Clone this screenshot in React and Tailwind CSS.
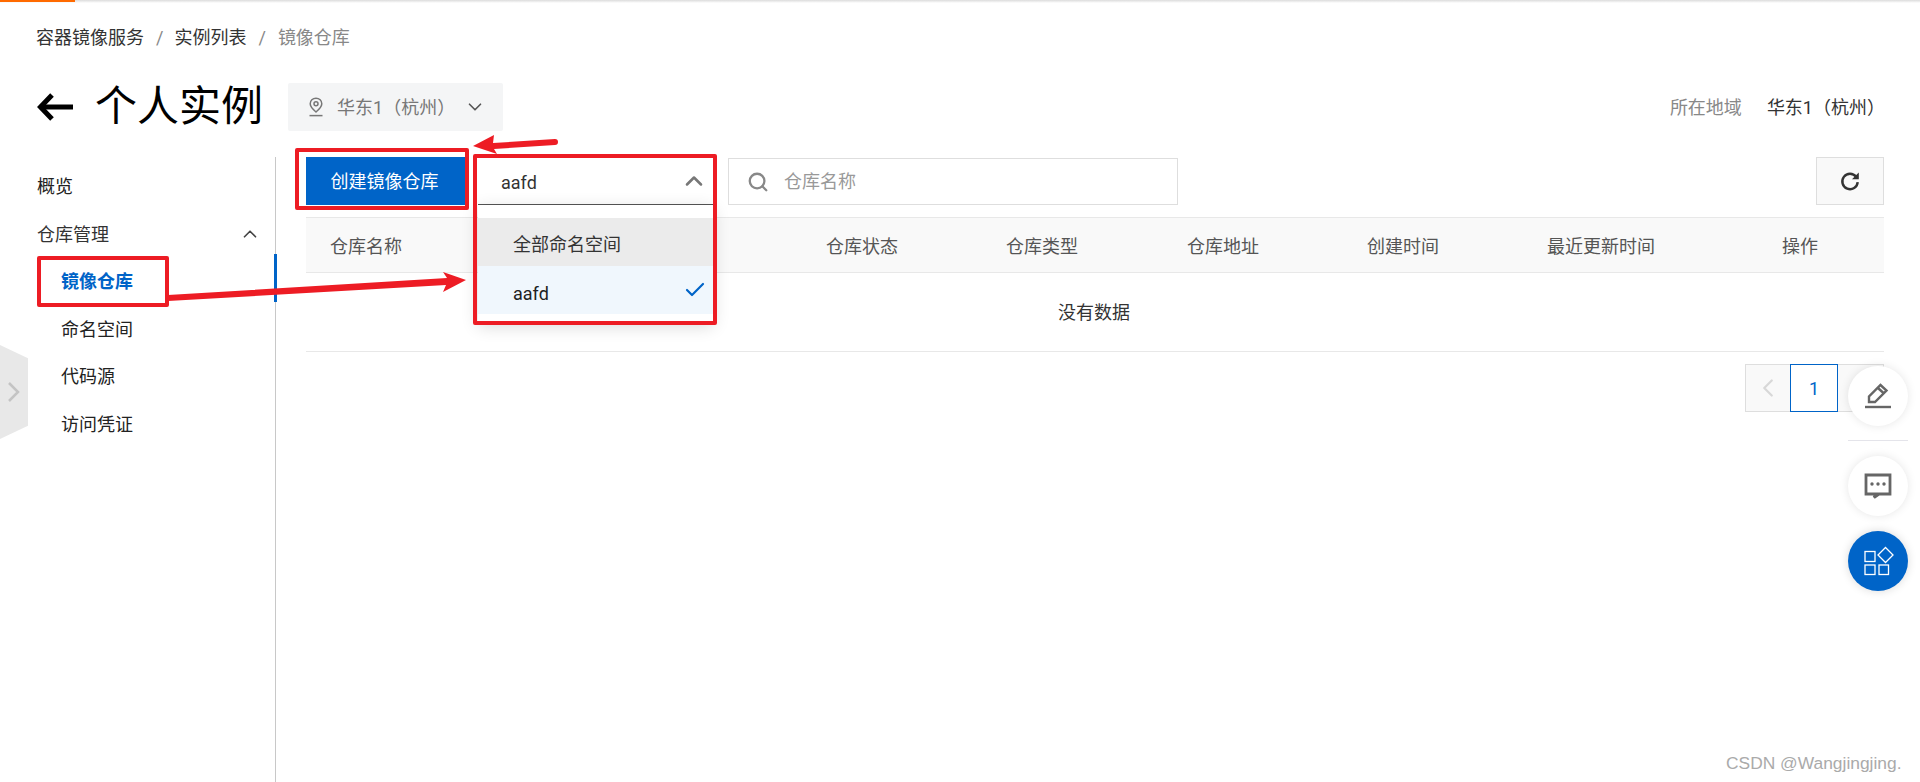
import { ChevronDown, ChevronUp, ChevronLeft, Check, Search } from "lucide-react";

const menu = ["命名空间", "代码源", "访问凭证"];
const columns = ["仓库名称", "仓库状态", "仓库类型", "仓库地址", "创建时间", "最近更新时间", "操作"];

function PinIcon() {
  return (
    <svg width="16" height="20" viewBox="0 0 16 20" fill="none" stroke="#777" strokeWidth="1.5">
      <path d="M8 1.2c-3.3 0-5.8 2.5-5.8 5.6 0 3.2 3.2 6 5.8 8.2 2.600-2.200 5.800-5 5.800-8.200 0-3.100-2.500-5.600-5.800-5.600z" />
      <circle cx="8" cy="6.800" r="2" />
      <path d="M1.500 18.600h13" />
    </svg>
  );
}

function RefreshIcon() {
  return (
    <svg width="22" height="22" viewBox="0 0 20 20" fill="none">
      <path d="M15.600 6.200A7 7 0 1 0 17 11" stroke="#333" strokeWidth="2.200" />
      <path d="M18 2.200v6.200h-6.200z" fill="#333" />
    </svg>
  );
}

function PenIcon() {
  return (
    <svg width="28" height="26" viewBox="0 0 28 26" fill="none" stroke="#666" strokeWidth="2.400">
      <path d="M5 19v-5.500L16.500 2l6 5.500L11 19z" />
      <path d="M14 5l6 5.500" />
      <path d="M1 24h26" />
    </svg>
  );
}

function ChatIcon() {
  return (
    <svg width="28" height="26" viewBox="0 0 28 26" fill="none">
      <path d="M2 2h24v19H15l-5 3.500 2-3.500H2z" stroke="#666" strokeWidth="2.800" />
      <circle cx="8" cy="11" r="1.700" fill="#666" />
      <circle cx="14" cy="11" r="1.700" fill="#666" />
      <circle cx="20" cy="11" r="1.700" fill="#666" />
    </svg>
  );
}

function AppsIcon() {
  return (
    <svg width="30" height="30" viewBox="0 0 30 30" fill="none" stroke="#fff" strokeWidth="1.300" className="ml-[2px]">
      <rect x="1" y="5.500" width="10" height="10" />
      <rect x="1" y="19" width="10" height="9.500" />
      <rect x="15" y="19" width="9.500" height="9.500" />
      <path d="M21.500 1.500L29 9l-7.500 7.500L14 9z" />
    </svg>
  );
}

export default function App() {
  return (
    <div className="relative h-[782px] overflow-hidden bg-white text-[18px] text-[#333] font-['Roboto','Noto_Sans_CJK_SC',sans-serif]">
      {/* top loading strip */}
      <div className="h-[3px] bg-gradient-to-b from-[#dcdcdc] to-white">
        <div className="h-[2px] w-[75px] bg-[#ff6a00]" />
      </div>

      <nav className="mt-[23px] flex h-[24px] items-center pl-[36px] leading-[24px]">
        <span>容器镜像服务</span>
        <span className="mx-[12px] text-[#888]">/</span>
        <span className="-ml-px">实例列表</span>
        <span className="mx-[12px] text-[#888]">/</span>
        <span className="text-[#888]">镜像仓库</span>
      </nav>

      <header className="mt-[33px] flex h-[48px] items-center pl-[37px] pr-[35px]">
        <svg width="36" height="28" viewBox="0 0 36 28" fill="none" stroke="#000" strokeWidth="5">
          <path d="M15 2L3.500 14 15 26" />
          <path d="M4 14h32" />
        </svg>
        <h1 className="ml-[22px] text-[42px] leading-[48px] text-black">个人实例</h1>
        <div className="ml-[25px] flex h-[48px] w-[215px] items-center rounded-[2px] bg-[#f4f5f6] pl-[20px] text-[#777]">
          <PinIcon />
          <span className="ml-[13px] whitespace-nowrap">华东1（杭州）</span>
          <ChevronDown className="ml-[9px] text-[#555]" size={22} strokeWidth={1.800} />
        </div>
        <div className="ml-auto text-[#888]">所在地域</div>
        <div className="ml-[25px] whitespace-nowrap">华东1（杭州）</div>
      </header>

      <div className="mt-[26px] flex h-[625px]">
        <aside className="relative w-[276px] shrink-0 border-r border-[#c8c8c8]">
          <div className="mt-[6px] flex h-[47.5px] items-center pl-[37px] text-[#222]">概览</div>
          <div className="flex h-[47.5px] items-center justify-between pl-[37px] pr-[14px]">
            <span>仓库管理</span>
            <ChevronUp size={22} strokeWidth={1.800} className="text-[#444]" />
          </div>
          <div className="relative flex h-[47.5px] items-center pl-[61px] font-bold text-[#0064c8]">
            镜像仓库
            <div className="absolute right-[-2px] top-[-4px] h-[48px] w-[3px] bg-[#0064c8]" />
          </div>
          {menu.map((item) => (
            <div key={item} className="flex h-[47.5px] items-center pl-[61px] text-[#222]">
              {item}
            </div>
          ))}
        </aside>

        <main className="min-w-0 flex-1 pl-[30px] pr-[36px]">
          <div className="flex h-[48px] items-stretch">
            <button className="w-[159px] bg-[#0064c8] pr-[2px] text-white">创建镜像仓库</button>
            <div className="relative ml-[13px] w-[235px]">
              <div className="flex h-[48px] items-center justify-between border-b border-[#555] pl-[23px] pr-[5px]">
                <span className="pt-[3px] text-[#333]">aafd</span>
                <ChevronUp size={28} strokeWidth={2.200} className="text-[#777]" />
              </div>
              <div className="absolute left-0 top-[48px] z-10 w-full bg-white pt-[13px] pb-[8px] shadow-[0_4px_16px_rgba(0,0,0,0.16)]">
                <div className="flex h-[48px] items-center bg-[#ebebeb] pl-[35px] pt-[5px]">全部命名空间</div>
                <div className="flex h-[48px] items-center justify-between bg-[#f0f7fd] pl-[35px] pr-[6px] text-[#222]">
                  <span className="pt-[7px]">aafd</span>
                  <Check size={24} strokeWidth={2.200} className="text-[#0064c8]" />
                </div>
              </div>
            </div>
            <div className="ml-[15px] mt-px flex w-[450px] items-center border border-[#dedede] pl-[18px] text-[#999]">
              <Search size={22} strokeWidth={2.500} className="text-[#888]" />
              <span className="ml-[15px]">仓库名称</span>
            </div>
            <button className="ml-auto flex w-[68px] items-center justify-center border border-[#dedede] bg-[#f9f9f9]">
              <RefreshIcon />
            </button>
          </div>

          <div className="mt-[12px] grid h-[56px] grid-cols-[496px_180px_181px_180px_180px_235px_126px] items-center border-y border-[#e8e8e8] bg-[#f9f9f9] text-[#555]">
            {columns.map((c) => (
              <div key={c} className="whitespace-nowrap pl-[24px] pt-[2px]">{c}</div>
            ))}
          </div>

          <div className="flex h-[79px] items-center justify-center border-b border-[#e8e8e8] pr-[2px] text-[#333]">
            没有数据
          </div>

          <div className="mt-[12px] flex justify-end">
            <div className="flex h-[48px] w-[139px] border border-[#dedede]">
              <div className="flex w-[44px] items-center justify-center bg-[#f9f9f9]">
                <ChevronLeft size={30} strokeWidth={1.800} className="text-[#d8d8d8]" />
              </div>
              <div className="-my-px flex w-[48px] items-center justify-center border border-[#0064c8] text-[#0064c8]">1</div>
              <div className="flex-1 bg-[#f9f9f9]" />
            </div>
          </div>
        </main>
      </div>

      {/* sidebar expander tab */}
      <div className="absolute left-0 top-[345px] flex h-[94px] w-[28px] items-center bg-[#e8e8e8] [clip-path:polygon(0_0,100%_14%,100%_86%,0_100%)]">
        <svg width="14" height="22" viewBox="0 0 14 22" fill="none" stroke="#c4c4c4" strokeWidth="2.500" className="ml-[7px]">
          <path d="M2 2l9 9-9 9" />
        </svg>
      </div>

      {/* floating buttons */}
      <div className="absolute left-[1848px] top-[366px] flex w-[60px] flex-col">
        <div className="flex h-[60px] items-center justify-center rounded-full bg-white shadow-[0_0_10px_rgba(0,0,0,0.1)]">
          <PenIcon />
        </div>
        <div className="mt-[14px] h-px bg-[#e4e4ea]" />
        <div className="mt-[15px] flex h-[60px] items-center justify-center rounded-full bg-white shadow-[0_0_10px_rgba(0,0,0,0.1)]">
          <ChatIcon />
        </div>
        <div className="mt-[15px] flex h-[60px] items-center justify-center rounded-full bg-[#0064c8] shadow-[0_0_10px_rgba(0,0,0,0.15)]">
          <AppsIcon />
        </div>
      </div>

      {/* red annotations */}
      <div className="absolute left-[295px] top-[148px] h-[62px] w-[174px] rounded-[2px] border-[4px] border-[#ed1c24]" />
      <div className="absolute left-[473px] top-[154px] z-20 h-[171px] w-[244px] rounded-[2px] border-[4px] border-[#ed1c24]" />
      <div className="absolute left-[37px] top-[256px] h-[51px] w-[132px] rounded-[2px] border-[4px] border-[#ed1c24]" />
      <svg className="absolute left-0 top-0 z-20" width="600" height="320" viewBox="0 0 600 320" fill="#ed1c24">
        <path d="M473 146L494 135l-1 8 62-4a3 3 0 0 1 0 6l-61 4 3 5z" />
        <path d="M168 295L447 278l-4-6 23 8-23 12 3-7-278 16z" />
      </svg>

      <div className="absolute left-[1726px] top-[751px] whitespace-nowrap font-['Liberation_Sans',sans-serif] text-[17.4px] leading-[24px] text-[#aaa]">
        CSDN @Wangjingjing.
      </div>
    </div>
  );
}
